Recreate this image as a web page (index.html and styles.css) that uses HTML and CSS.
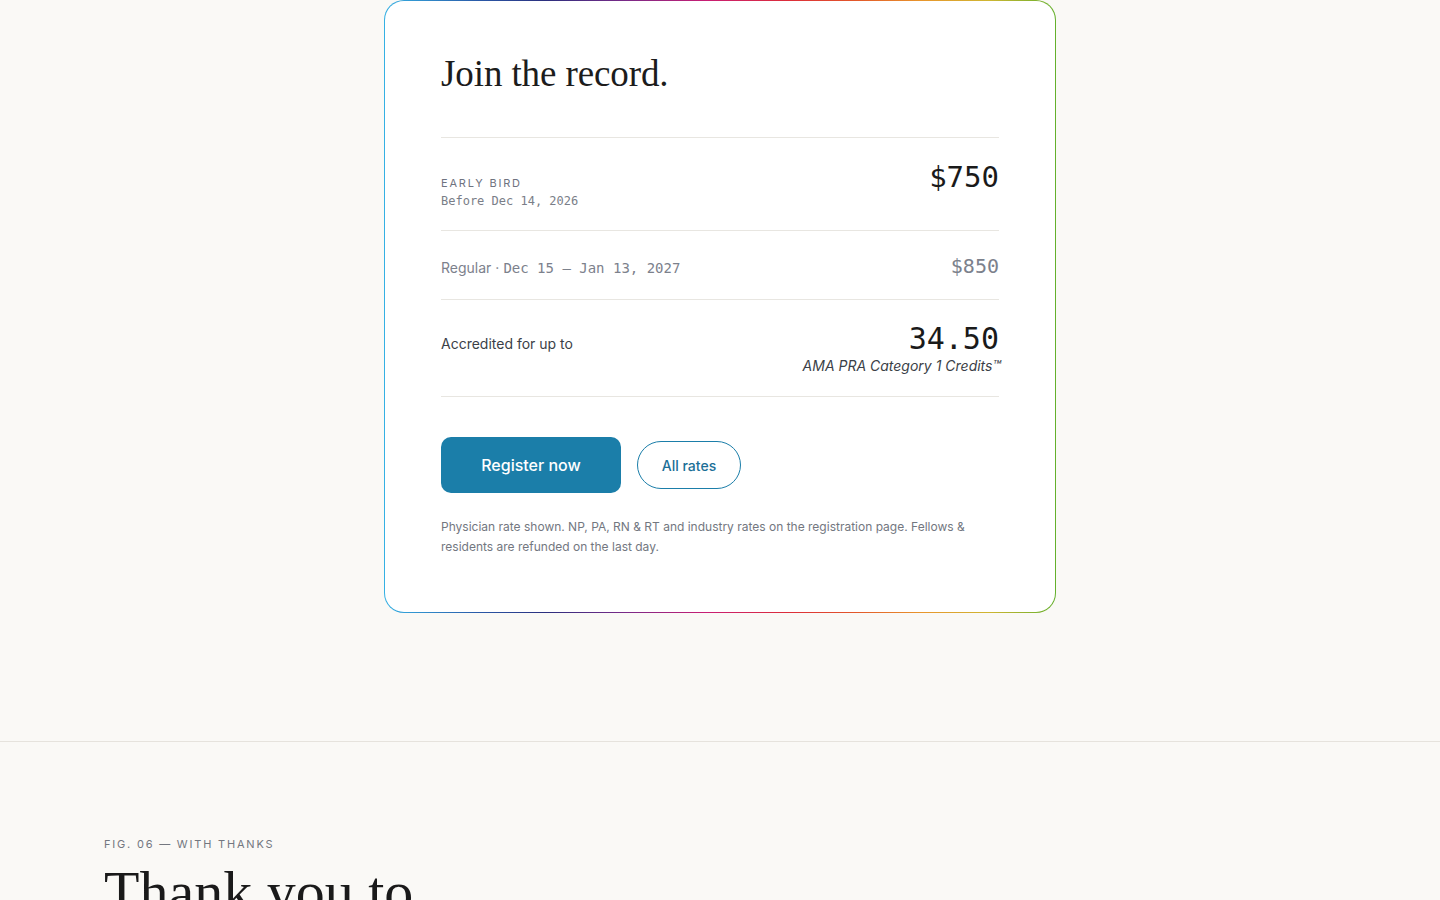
FILE: index.html
```html
<!DOCTYPE html>
<html lang="en">
<head>
<meta charset="utf-8">
<title>Join the record</title>
<link rel="stylesheet" href="styles.css">
</head>
<body>
<section class="register">
  <div class="card">
    <h2 class="card-title">Join the record.</h2>
    <div class="row row-early">
      <div class="row-left">
        <div class="eyebrow">EARLY BIRD</div>
        <div class="mono-date">Before Dec 14, 2026</div>
      </div>
      <div class="price price-main">$750</div>
    </div>
    <div class="row row-regular">
      <div class="row-left regular-line"><span class="regular-label">Regular</span><span class="dot">·</span><span class="mono-range">Dec 15 – Jan 13, 2027</span></div>
      <div class="price price-muted">$850</div>
    </div>
    <div class="row row-credits">
      <div class="row-left credits-label">Accredited for up to</div>
      <div class="credits">
        <div class="credits-num">34.50</div>
        <div class="credits-unit">AMA PRA Category 1 Credits™</div>
      </div>
    </div>
    <div class="actions">
      <a class="btn btn-primary" href="#">Register now</a>
      <a class="btn btn-outline" href="#">All rates</a>
    </div>
    <p class="note">Physician rate shown. NP, PA, RN &amp; RT and industry rates on the registration page. Fellows &amp; residents are refunded on the last day.</p>
  </div>
</section>
<section class="thanks">
  <div class="fig-label">FIG. 06 — WITH THANKS</div>
  <h2 class="thanks-title">Thank you to</h2>
</section>
</body>
</html>
```
FILE: styles.css
```css
* { box-sizing: border-box; }
html, body { margin: 0; padding: 0; }
body {
  background: #faf9f6;
  font-family: Inter, "Liberation Sans", sans-serif;
  color: #1a1a1a;
}
.register {
  display: flex;
  justify-content: center;
  padding-bottom: 128px;
  border-bottom: 1px solid #e6e3dd;
}
.card {
  width: 672px;
  padding: 52px 56px 55px;
  border: 1px solid transparent;
  border-radius: 20px;
  background:
    linear-gradient(#ffffff, #ffffff) padding-box,
    linear-gradient(90deg, #35b1e4 0%, #2a5aa8 14%, #2b2f7e 24%, #7a2a88 36%, #c81e74 48%, #dc2d3a 60%, #e2572a 70%, #e8962c 80%, #cfb632 90%, #63b02c 100%) border-box;
}
.card-title {
  margin: 0 0 42px;
  font-family: "Liberation Serif", serif;
  font-weight: 400;
  font-size: 37px;
  line-height: 42px;
  color: #1c1c1c;
  letter-spacing: -0.1px;
}
.row {
  display: flex;
  justify-content: space-between;
  align-items: baseline;
  border-top: 1px solid #e8e6e1;
}
.row-early { padding: 22px 0 19px; }
.row-regular { padding: 23px 0 21px; }
.row-credits { padding: 22px 0 20px; border-bottom: 1px solid #e8e6e1; }
.eyebrow {
  font-size: 11px;
  letter-spacing: 1.8px;
  color: #6f7380;
  line-height: 18px;
}
.mono-date {
  font-family: "DejaVu Sans Mono", monospace;
  font-size: 12px;
  color: #7a7e88;
  line-height: 19px;
}
.price {
  font-family: "DejaVu Sans Mono", monospace;
  line-height: 1.2;
}
.price-main { font-size: 29px; color: #1a1a1a; }
.price-muted { font-size: 20px; color: #7c818c; }
.regular-line { font-size: 14px; color: #7c818c; }
.regular-label { font-size: 14px; }
.dot { margin: 0 4px; }
.mono-range {
  font-family: "DejaVu Sans Mono", monospace;
  font-size: 14px;
}
.credits-label { font-size: 14px; color: #3b3f47; }
.credits { text-align: right; }
.credits-num {
  font-family: "DejaVu Sans Mono", monospace;
  font-size: 30px;
  line-height: 34px;
  color: #1a1a1a;
}
.credits-unit {
  font-size: 14px;
  font-style: italic;
  color: #3b3f47;
  line-height: 20px;
  margin-right: -2px;
}
.actions {
  display: flex;
  align-items: center;
  gap: 16px;
  margin-top: 40px;
}
.btn {
  display: inline-flex;
  align-items: center;
  justify-content: center;
  text-decoration: none;
}
.btn-primary {
  width: 180px;
  height: 56px;
  background: #1b7ea9;
  color: #ffffff;
  border-radius: 10px;
  font-size: 16px;
  font-weight: 500;
}
.btn-outline {
  width: 104px;
  height: 48px;
  border: 1px solid #1b7ea9;
  border-radius: 24px;
  color: #1b6f97;
  font-size: 14px;
  font-weight: 500;
}
.note {
  margin: 24px 0 0;
  font-size: 12px;
  line-height: 20px;
  color: #73777f;
  max-width: 540px;
}
.thanks {
  padding: 94px 104px 0;
}
.fig-label {
  font-size: 11px;
  letter-spacing: 1.8px;
  color: #73777f;
  line-height: 16px;
}
.thanks-title {
  margin: 8px 0 0;
  font-family: "Liberation Serif", serif;
  font-weight: 400;
  font-size: 58px;
  line-height: 64px;
  color: #1a1a1a;
}
```
